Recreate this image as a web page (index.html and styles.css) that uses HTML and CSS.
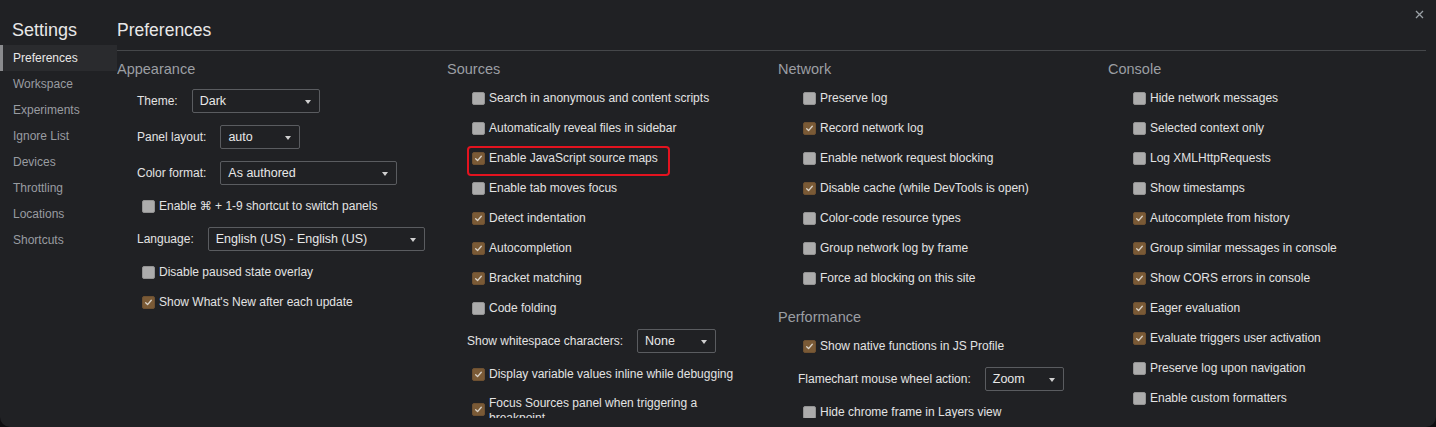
FILE: index.html
```html
<!DOCTYPE html>
<html lang="en">
<head>
<meta charset="utf-8">
<title>Settings</title>
<link rel="stylesheet" href="styles.css">
</head>
<body>
<div class="window">
  <aside class="sidebar">
    <div class="sidebar-title">Settings</div>
    <nav class="nav">
      <div class="nav-item is-active">Preferences</div>
      <div class="nav-item">Workspace</div>
      <div class="nav-item">Experiments</div>
      <div class="nav-item">Ignore List</div>
      <div class="nav-item">Devices</div>
      <div class="nav-item">Throttling</div>
      <div class="nav-item">Locations</div>
      <div class="nav-item">Shortcuts</div>
    </nav>
  </aside>
  <main class="main">
    <header class="main-header">Preferences</header>
    <button class="close" aria-label="Close">
      <svg width="9" height="9" viewBox="0 0 9 9"><path d="M1 1L8 8M8 1L1 8" stroke="#9aa0a6" stroke-width="1.3" fill="none"/></svg>
    </button>
    <div class="columns">
      <div class="col">
        <section class="section">
          <h2 class="section-title">Appearance</h2>
          <div class="row row-select"><span class="label">Theme:</span><span class="select w-theme">Dark<i class="caret"></i></span></div>
          <div class="row row-select"><span class="label">Panel layout:</span><span class="select w-panel">auto<i class="caret"></i></span></div>
          <div class="row row-select"><span class="label">Color format:</span><span class="select w-color">As authored<i class="caret"></i></span></div>
          <div class="row"><span class="cb"></span><span class="text">Enable ⌘ + 1-9 shortcut to switch panels</span></div>
          <div class="row row-select"><span class="label">Language:</span><span class="select w-lang">English (US) - English (US)<i class="caret"></i></span></div>
          <div class="row"><span class="cb"></span><span class="text">Disable paused state overlay</span></div>
          <div class="row"><span class="cb on"><svg viewBox="0 0 13 13"><path d="M3.2 6.8L5.4 9L9.8 3.8" /></svg></span><span class="text">Show What's New after each update</span></div>
        </section>
      </div>
      <div class="col">
        <section class="section">
          <h2 class="section-title">Sources</h2>
          <div class="row"><span class="cb"></span><span class="text">Search in anonymous and content scripts</span></div>
          <div class="row"><span class="cb"></span><span class="text">Automatically reveal files in sidebar</span></div>
          <div class="row highlight"><span class="cb on"><svg viewBox="0 0 13 13"><path d="M3.2 6.8L5.4 9L9.8 3.8" /></svg></span><span class="text">Enable JavaScript source maps</span></div>
          <div class="row"><span class="cb"></span><span class="text">Enable tab moves focus</span></div>
          <div class="row"><span class="cb on"><svg viewBox="0 0 13 13"><path d="M3.2 6.8L5.4 9L9.8 3.8" /></svg></span><span class="text">Detect indentation</span></div>
          <div class="row"><span class="cb on"><svg viewBox="0 0 13 13"><path d="M3.2 6.8L5.4 9L9.8 3.8" /></svg></span><span class="text">Autocompletion</span></div>
          <div class="row"><span class="cb on"><svg viewBox="0 0 13 13"><path d="M3.2 6.8L5.4 9L9.8 3.8" /></svg></span><span class="text">Bracket matching</span></div>
          <div class="row"><span class="cb"></span><span class="text">Code folding</span></div>
          <div class="row row-select"><span class="label">Show whitespace characters:</span><span class="select w-small">None<i class="caret"></i></span></div>
          <div class="row"><span class="cb on"><svg viewBox="0 0 13 13"><path d="M3.2 6.8L5.4 9L9.8 3.8" /></svg></span><span class="text">Display variable values inline while debugging</span></div>
          <div class="row row-wrap"><span class="cb on"><svg viewBox="0 0 13 13"><path d="M3.2 6.8L5.4 9L9.8 3.8" /></svg></span><span class="text">Focus Sources panel when triggering a breakpoint</span></div>
        </section>
      </div>
      <div class="col">
        <section class="section">
          <h2 class="section-title">Network</h2>
          <div class="row"><span class="cb"></span><span class="text">Preserve log</span></div>
          <div class="row"><span class="cb on"><svg viewBox="0 0 13 13"><path d="M3.2 6.8L5.4 9L9.8 3.8" /></svg></span><span class="text">Record network log</span></div>
          <div class="row"><span class="cb"></span><span class="text">Enable network request blocking</span></div>
          <div class="row"><span class="cb on"><svg viewBox="0 0 13 13"><path d="M3.2 6.8L5.4 9L9.8 3.8" /></svg></span><span class="text">Disable cache (while DevTools is open)</span></div>
          <div class="row"><span class="cb"></span><span class="text">Color-code resource types</span></div>
          <div class="row"><span class="cb"></span><span class="text">Group network log by frame</span></div>
          <div class="row"><span class="cb"></span><span class="text">Force ad blocking on this site</span></div>
        </section>
        <section class="section section-next">
          <h2 class="section-title">Performance</h2>
          <div class="row"><span class="cb on"><svg viewBox="0 0 13 13"><path d="M3.2 6.8L5.4 9L9.8 3.8" /></svg></span><span class="text">Show native functions in JS Profile</span></div>
          <div class="row row-select"><span class="label">Flamechart mouse wheel action:</span><span class="select w-small">Zoom<i class="caret"></i></span></div>
          <div class="row"><span class="cb"></span><span class="text">Hide chrome frame in Layers view</span></div>
        </section>
      </div>
      <div class="col">
        <section class="section">
          <h2 class="section-title">Console</h2>
          <div class="row"><span class="cb"></span><span class="text">Hide network messages</span></div>
          <div class="row"><span class="cb"></span><span class="text">Selected context only</span></div>
          <div class="row"><span class="cb"></span><span class="text">Log XMLHttpRequests</span></div>
          <div class="row"><span class="cb"></span><span class="text">Show timestamps</span></div>
          <div class="row"><span class="cb on"><svg viewBox="0 0 13 13"><path d="M3.2 6.8L5.4 9L9.8 3.8" /></svg></span><span class="text">Autocomplete from history</span></div>
          <div class="row"><span class="cb on"><svg viewBox="0 0 13 13"><path d="M3.2 6.8L5.4 9L9.8 3.8" /></svg></span><span class="text">Group similar messages in console</span></div>
          <div class="row"><span class="cb on"><svg viewBox="0 0 13 13"><path d="M3.2 6.8L5.4 9L9.8 3.8" /></svg></span><span class="text">Show CORS errors in console</span></div>
          <div class="row"><span class="cb on"><svg viewBox="0 0 13 13"><path d="M3.2 6.8L5.4 9L9.8 3.8" /></svg></span><span class="text">Eager evaluation</span></div>
          <div class="row"><span class="cb on"><svg viewBox="0 0 13 13"><path d="M3.2 6.8L5.4 9L9.8 3.8" /></svg></span><span class="text">Evaluate triggers user activation</span></div>
          <div class="row"><span class="cb"></span><span class="text">Preserve log upon navigation</span></div>
          <div class="row"><span class="cb"></span><span class="text">Enable custom formatters</span></div>
        </section>
      </div>
    </div>
  </main>
</div>
</body>
</html>
```

FILE: styles.css
```css
* { box-sizing: border-box; }

html, body {
  margin: 0;
  padding: 0;
  background: #0d0d0f;
}

body {
  font-family: "Liberation Sans", Arial, "DejaVu Sans", sans-serif;
  font-size: 12px;
  color: #e3e3e3;
  width: 1436px;
  height: 427px;
  overflow: hidden;
}

.window {
  display: flex;
  width: 1436px;
  height: 427px;
  background: #202124;
  border-radius: 0 0 10px 10px;
  overflow: hidden;
}

/* Sidebar */
.sidebar {
  width: 117px;
  flex: none;
}

.sidebar-title {
  font-size: 18px;
  line-height: 22px;
  padding: 19px 0 4px 12px;
  height: 45px;
  color: #e8e8e8;
}

.nav-item {
  height: 26px;
  line-height: 26px;
  padding-left: 13px;
  color: #999ca1;
  font-size: 12px;
}

.nav-item.is-active {
  background: #2a2b2e;
  color: #e8e8e8;
  border-left: 3px solid #8a8b8e;
  padding-left: 10px;
}

/* Main */
.main {
  flex: 1;
  position: relative;
  min-width: 0;
}

.main-header {
  font-size: 17.5px;
  line-height: 22px;
  padding: 19px 0 9px 0;
  height: 51px;
  border-bottom: 1px solid #45474a;
  margin-right: 10px;
  color: #e8e8e8;
}

.close {
  position: absolute;
  top: 9px;
  right: 11px;
  width: 11px;
  height: 11px;
  padding: 1px;
  border: 0;
  background: transparent;
  display: flex;
}

.columns {
  display: grid;
  grid-template-columns: 330px 331px 330px 330px;
  padding-top: 8px;
  height: 367px;
  overflow: hidden;
}

.section-title {
  margin: 0 0 4px 0;
  font-size: 14.5px;
  line-height: 20px;
  font-weight: normal;
  color: #9b9ea3;
}

.section-next { margin-top: 14px; }

.row {
  position: relative;
  display: flex;
  align-items: center;
  height: 30px;
  padding-left: 25px;
  white-space: nowrap;
}

.row-select {
  height: 36px;
  padding-left: 20px;
}

.row-wrap {
  white-space: normal;
  align-items: flex-start;
  height: auto;
  padding-top: 7px;
}

.row-wrap .cb { margin-top: 7px; }
.row-wrap .text { width: 215px; line-height: 15px; }

.label {
  margin-right: 14px;
  color: #e3e3e3;
}

.text { color: #e3e3e3; }

.cb {
  flex: none;
  width: 13px;
  height: 13px;
  margin-right: 4px;
  border-radius: 2px;
  background: #acacac;
  border: 1px solid #929292;
  display: flex;
}

.cb.on {
  background: #7a5a36;
  border-color: #6d5031;
}

.cb svg {
  width: 11px;
  height: 11px;
}

.cb svg path {
  fill: none;
  stroke: #d9d2c8;
  stroke-width: 1.6;
  stroke-linecap: round;
  stroke-linejoin: round;
}

.select {
  position: relative;
  display: flex;
  align-items: center;
  height: 24px;
  padding-left: 7px;
  border: 1px solid #5a5c60;
  border-radius: 2px;
  background: #202124;
  color: #e8e8e8;
  font-size: 12.5px;
}

.caret {
  position: absolute;
  right: 8px;
  top: 10px;
  width: 0;
  height: 0;
  border-left: 3px solid transparent;
  border-right: 3px solid transparent;
  border-top: 4px solid #d0d0d0;
}

.w-theme { width: 128px; }
.w-panel { width: 80px; }
.w-color { width: 177px; }
.w-lang { width: 217px; }
.w-small { width: 79px; }

.highlight::after {
  content: "";
  position: absolute;
  left: 20px;
  top: 3px;
  width: 199px;
  height: 26px;
  border: 2.5px solid #e3131f;
  border-radius: 4px;
  pointer-events: none;
}
```
